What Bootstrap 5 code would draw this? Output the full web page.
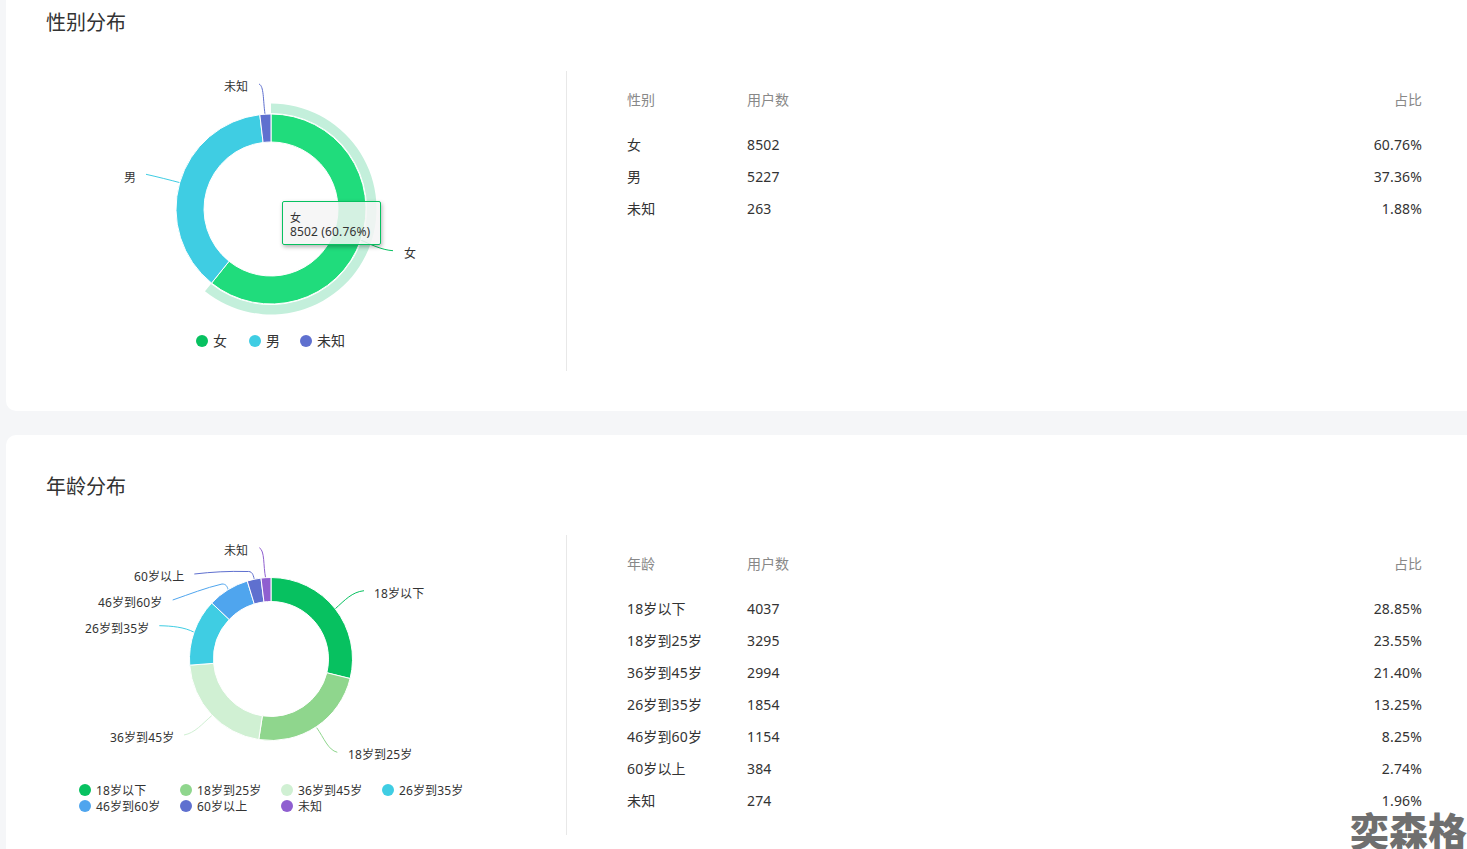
<!DOCTYPE html>
<html lang="zh-CN">
<head>
<meta charset="utf-8">
<title>用户分布</title>
<link href="https://cdn.jsdelivr.net/npm/bootstrap@5.3.0/dist/css/bootstrap.min.css" rel="stylesheet">
<style>
html,body{height:849px;overflow:hidden}
body{background:#f5f6f8;color:#333;font-family:"Noto Sans","Noto Sans CJK SC",sans-serif;font-size:14px}
.stats-page{margin-top:-29px;padding-left:6px}
.stats-card{background:#fff;border-radius:10px 0 0 10px;padding:0 45px 40px 40px;height:440px;margin-bottom:24px}
.stats-title{font-size:20px;font-weight:400;line-height:28px;margin:0;padding:38px 0 34px;color:#333;height:100px}
.chart-box{width:521px;height:300px;flex:none;border-right:1px solid #e8e8e8;position:relative}
.chart-box svg{display:block;width:520px;height:300px}
.chart-box text{font-size:12px;fill:#333;letter-spacing:.12px}
.chart-box text.leg-big{font-size:14px}
.leader{fill:none;stroke-width:1}
.tip-box{position:absolute;left:236px;top:130px;width:99px;height:44px;box-sizing:border-box;background:rgba(245,245,245,.85);border:1px solid #07c160;border-radius:2px;box-shadow:1px 2px 4px rgba(0,0,0,.3);padding:9px 7px 0;font-size:12px;line-height:14px;color:#333;white-space:nowrap;letter-spacing:.15px}
.tip-name{font-size:11px}
.stats-table{width:795px;margin:12px 0 0 60px;border-collapse:collapse;align-self:flex-start;table-layout:fixed;letter-spacing:.15px}
.stats-table th{font-weight:400;color:#888;height:45px;padding:0 0 13px;vertical-align:middle;letter-spacing:0}
.stats-table td{height:32px;padding:0;vertical-align:middle;color:#333}
.stats-table .c-a{width:120px}
.stats-table .c-b{width:120px}
.wm-text{position:absolute;right:0;bottom:0;font-family:"Noto Sans CJK SC",sans-serif;font-weight:900;font-size:39px;line-height:40px;color:#6f6f6f;letter-spacing:0}
</style>
</head>
<body>
<div class="stats-page">
  <section class="stats-card">
    <h2 class="stats-title">性别分布</h2>
    <div class="d-flex">
      <div class="chart-box">
        <svg viewBox="46 71 520 300" id="chart1">
          <path class="leader" stroke="#5f70cf" d="M259 84C264 86 263 100 265 114"/>
          <path class="leader" stroke="#3fcde3" d="M146 174.3C158 177 170 180 180 182.7"/>
          <path class="leader" stroke="#07c160" d="M360.7 240C372 245 382 250 393 250.7"/>
          <text x="224" y="91">未知</text>
          <text x="124" y="182">男</text>
          <text x="404" y="258">女</text>
          <circle cx="202" cy="341" r="6" fill="#07c160"/><text class="leg-big" x="213" y="346">女</text>
          <circle cx="255" cy="341" r="6" fill="#3fcde3"/><text class="leg-big" x="266" y="346">男</text>
          <circle cx="306" cy="341" r="6" fill="#5f70cf"/><text class="leg-big" x="317" y="346">未知</text>
        </svg>
        <div class="tip-box"><span class="tip-name">女</span><br>8502 (60.76%)</div>
      </div>
      <table class="stats-table">
        <thead><tr><th class="c-a">性别</th><th class="c-b">用户数</th><th class="text-end">占比</th></tr></thead>
        <tbody>
          <tr><td>女</td><td>8502</td><td class="text-end">60.76%</td></tr>
          <tr><td>男</td><td>5227</td><td class="text-end">37.36%</td></tr>
          <tr><td>未知</td><td>263</td><td class="text-end">1.88%</td></tr>
        </tbody>
      </table>
    </div>
  </section>
  <section class="stats-card">
    <h2 class="stats-title">年龄分布</h2>
    <div class="d-flex">
      <div class="chart-box">
        <svg viewBox="46 535 520 300" id="chart2">
          <path class="leader" stroke="#07c160" d="M335 609C345 600 352 592 364 590.7"/>
          <path class="leader" stroke="#8fd68d" d="M316.7 727.7C324 738 328 750 337.3 752.3"/>
          <path class="leader" stroke="#d0f0d3" d="M211.7 715.7C202 724 195 733 184 735"/>
          <path class="leader" stroke="#3fcde3" d="M194.3 632.3C184 627 172 626 159.3 625.7"/>
          <path class="leader" stroke="#4fa5ee" d="M228.3 590C227 586 226 584 222 584C205 588 190 594 172.7 600"/>
          <path class="leader" stroke="#5f70cf" d="M254.3 579.3C253 574 252 571 247 571.5C228 571 212 572 194.3 574"/>
          <path class="leader" stroke="#8f5fd0" d="M265.7 578.3C263 565 265 551 259.3 547.7"/>
          <text x="374" y="598">18岁以下</text>
          <text x="348" y="759">18岁到25岁</text>
          <text x="110" y="742">36岁到45岁</text>
          <text x="85" y="633">26岁到35岁</text>
          <text x="98" y="607">46岁到60岁</text>
          <text x="134" y="581">60岁以上</text>
          <text x="224" y="555">未知</text>
          <circle cx="85" cy="790" r="6" fill="#07c160"/><text x="96" y="795">18岁以下</text>
          <circle cx="186" cy="790" r="6" fill="#8fd68d"/><text x="197" y="795">18岁到25岁</text>
          <circle cx="287" cy="790" r="6" fill="#d0f0d3"/><text x="298" y="795">36岁到45岁</text>
          <circle cx="388" cy="790" r="6" fill="#3fcde3"/><text x="399" y="795">26岁到35岁</text>
          <circle cx="85" cy="806" r="6" fill="#4fa5ee"/><text x="96" y="811">46岁到60岁</text>
          <circle cx="186" cy="806" r="6" fill="#5f70cf"/><text x="197" y="811">60岁以上</text>
          <circle cx="287" cy="806" r="6" fill="#8f5fd0"/><text x="298" y="811">未知</text>
        </svg>
      </div>
      <table class="stats-table">
        <thead><tr><th class="c-a">年龄</th><th class="c-b">用户数</th><th class="text-end">占比</th></tr></thead>
        <tbody>
          <tr><td>18岁以下</td><td>4037</td><td class="text-end">28.85%</td></tr>
          <tr><td>18岁到25岁</td><td>3295</td><td class="text-end">23.55%</td></tr>
          <tr><td>36岁到45岁</td><td>2994</td><td class="text-end">21.40%</td></tr>
          <tr><td>26岁到35岁</td><td>1854</td><td class="text-end">13.25%</td></tr>
          <tr><td>46岁到60岁</td><td>1154</td><td class="text-end">8.25%</td></tr>
          <tr><td>60岁以上</td><td>384</td><td class="text-end">2.74%</td></tr>
          <tr><td>未知</td><td>274</td><td class="text-end">1.96%</td></tr>
        </tbody>
      </table>
    </div>
  </section>
</div>
<div class="wm-text">奕森格</div>
<script>
function arc(cx,cy,r0,r1,a0,a1){
  var p=function(r,a){var t=a*Math.PI*2;return (cx+r*Math.sin(t)).toFixed(2)+' '+(cy-r*Math.cos(t)).toFixed(2)};
  var big=(a1-a0)>0.5?1:0;
  return 'M'+p(r1,a0)+'A'+r1+' '+r1+' 0 '+big+' 1 '+p(r1,a1)+'L'+p(r0,a1)+'A'+r0+' '+r0+' 0 '+big+' 0 '+p(r0,a0)+'Z';
}
function donut(id,cx,cy,r0,r1,data,ring){
  var svg=document.getElementById(id),a=0,first=svg.firstChild,ns='http://www.w3.org/2000/svg';
  data.forEach(function(d){
    var b=a+d[0]/100;
    if(ring&&d[2]){var e=document.createElementNS(ns,'path');e.setAttribute('d',arc(cx,cy,ring[0],ring[1],a,b));e.setAttribute('fill',ring[2]);svg.insertBefore(e,first);}
    var s=document.createElementNS(ns,'path');
    s.setAttribute('d',arc(cx,cy,r0,r1,a,b));s.setAttribute('fill',d[1]);s.setAttribute('stroke','#fff');s.setAttribute('stroke-width','1');
    svg.appendChild(s);a=b;
  });
}
donut('chart1',271,209,67,95,[[60.76,'#20dc7c',1],[37.36,'#3fcde3'],[1.88,'#5f70cf']],[96,105.5,'#c3efdb']);
donut('chart2',271,659,57.5,81.5,[[28.85,'#07c160'],[23.55,'#8fd68d'],[21.40,'#d0f0d3'],[13.25,'#3fcde3'],[8.25,'#4fa5ee'],[2.74,'#5f70cf'],[1.96,'#8f5fd0']]);
</script>
<script src="https://cdn.jsdelivr.net/npm/bootstrap@5.3.0/dist/js/bootstrap.bundle.min.js"></script>
</body>
</html>
